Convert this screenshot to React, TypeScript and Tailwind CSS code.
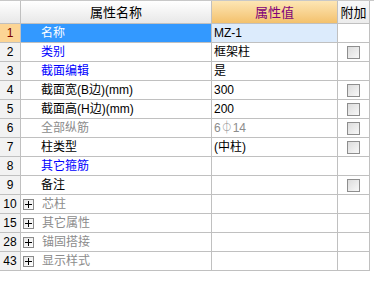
import React from "react";

type Row = {
  no: string;
  name: string;
  value?: string;
  tone?: "blue" | "gray" | "black";
  check?: boolean;
  group?: boolean;
};

const rows: Row[] = [
  { no: "1", name: "名称", value: "MZ-1", tone: "blue" },
  { no: "2", name: "类别", value: "框架柱", tone: "blue", check: true },
  { no: "3", name: "截面编辑", value: "是", tone: "blue" },
  { no: "4", name: "截面宽(B边)(mm)", value: "300", check: true },
  { no: "5", name: "截面高(H边)(mm)", value: "200", check: true },
  { no: "6", name: "全部纵筋", value: "6⏀14", tone: "gray", check: true },
  { no: "7", name: "柱类型", value: "(中柱)", check: true },
  { no: "8", name: "其它箍筋", tone: "blue" },
  { no: "9", name: "备注", check: true },
  { no: "10", name: "芯柱", group: true },
  { no: "15", name: "其它属性", group: true },
  { no: "28", name: "锚固搭接", group: true },
  { no: "43", name: "显示样式", group: true },
];

const font = { fontFamily: '"Liberation Sans","Noto Sans CJK SC",sans-serif' };

function Check() {
  return (
    <div className="w-[13px] h-[13px] border border-[#8e8e8e] bg-gradient-to-br from-[#dcdcdc] to-[#f8f8f8]" />
  );
}

function Plus() {
  return (
    <div className="w-[11px] h-[11px] border border-[#8a8a8a] bg-gradient-to-br from-[#e8e8e8] to-[#ffffff] flex items-center justify-center">
      <svg width="9" height="9" viewBox="0 0 9 9">
        <path d="M1 4.5h7M4.5 1v7" stroke="#000" strokeWidth="1" shapeRendering="crispEdges" />
      </svg>
    </div>
  );
}

const toneCls = { blue: "text-[#0000ff]", gray: "text-[#8c8c8c]", black: "text-black" };

export default function App() {
  return (
    <div className="w-[374px] h-[284px] bg-white text-[12px] leading-none" style={font}>
      <div className="grid grid-cols-[21px_191px_126px_32px] border-t border-[#c8c8c8]">
        {/* header */}
        <div className="h-[23px] border-r border-b border-[#c0c0c0] bg-gradient-to-b from-white to-[#e8e8e8]" />
        <div className="h-[23px] border-r border-b border-[#c0c0c0] bg-gradient-to-b from-white to-[#e8e8e8] flex items-center justify-center text-[13px] text-black">
          属性名称
        </div>
        <div className="h-[23px] border-r border-b border-[#c0c0c0] bg-gradient-to-b from-[#fde6b4] to-[#f3c16c] flex items-center justify-center text-[13px] text-[#80007a]">
          属性值
        </div>
        <div className="h-[23px] border-r border-b border-[#c0c0c0] bg-gradient-to-b from-[#f8f8f8] to-[#ececec] flex items-center justify-center text-[13px] text-black">
          附加
        </div>

        {rows.map((r, i) => {
          const sel = i === 0;
          const tone = r.group ? "gray" : r.tone ?? "black";
          return (
            <React.Fragment key={r.no}>
              <div
                className={`h-[19px] border-r border-b border-[#c0c0c0] flex items-center justify-center text-[12px] ${
                  sel ? "bg-[#fcd595] text-[#7a0000]" : "bg-[#f2f2f2] text-black"
                }`}
              >
                {r.no}
              </div>
              <div
                className={`h-[19px] border-r border-b border-[#c0c0c0] flex items-center ${
                  sel ? "bg-[#3399ff] text-white" : toneCls[tone]
                } ${r.group ? "pl-[2px] gap-[8px]" : "pl-[20px]"}`}
              >
                {r.group && <Plus />}
                <span className="text-[12px]">{r.name}</span>
              </div>
              <div
                className={`h-[19px] border-r border-b border-[#c0c0c0] flex items-center pl-[2px] ${
                  sel ? "bg-[#dcebfc]" : ""
                } ${r.tone === "gray" ? "text-[#8c8c8c]" : "text-black"}`}
              >
                {r.value}
              </div>
              <div className="h-[19px] border-r border-b border-[#c0c0c0] flex items-center justify-center">
                {r.check && <Check />}
              </div>
            </React.Fragment>
          );
        })}
      </div>
    </div>
  );
}
